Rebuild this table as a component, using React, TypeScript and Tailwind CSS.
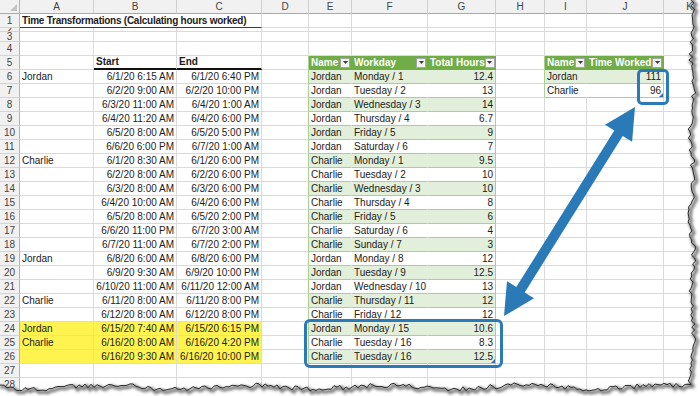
import React from 'react';

const GRID_R = 'border-r-[#dadada]';
const GRID_B = 'border-b border-b-[#dadada]';
const GREEN_R = 'border-r-[#a9d08e]';
const GREEN_B = 'border-b border-b-[#a9d08e]';
const CLEAR_R = 'border-r-transparent';
const BAND = 'bg-[#e2efda]';
const YELLOW = 'bg-[#fff44f]';

const log = [
    [6, 'Jordan', '6/1/20 6:15 AM', '6/1/20 6:40 PM', 'Jordan', 'Monday / 1', '12.4'],
    [7, '', '6/2/20 9:00 AM', '6/2/20 10:00 PM', 'Jordan', 'Tuesday / 2', '13'],
    [8, '', '6/3/20 11:00 AM', '6/4/20 1:00 AM', 'Jordan', 'Wednesday / 3', '14'],
    [9, '', '6/4/20 11:20 AM', '6/4/20 6:00 PM', 'Jordan', 'Thursday / 4', '6.7'],
    [10, '', '6/5/20 8:00 AM', '6/5/20 5:00 PM', 'Jordan', 'Friday / 5', '9'],
    [11, '', '6/6/20 6:00 PM', '6/7/20 1:00 AM', 'Jordan', 'Saturday / 6', '7'],
    [12, 'Charlie', '6/1/20 8:30 AM', '6/1/20 6:00 PM', 'Charlie', 'Monday / 1', '9.5'],
    [13, '', '6/2/20 8:00 AM', '6/2/20 6:00 PM', 'Charlie', 'Tuesday / 2', '10'],
    [14, '', '6/3/20 8:00 AM', '6/3/20 6:00 PM', 'Charlie', 'Wednesday / 3', '10'],
    [15, '', '6/4/20 10:00 AM', '6/4/20 6:00 PM', 'Charlie', 'Thursday / 4', '8'],
    [16, '', '6/5/20 8:00 AM', '6/5/20 2:00 PM', 'Charlie', 'Friday / 5', '6'],
    [17, '', '6/6/20 11:00 PM', '6/7/20 3:00 AM', 'Charlie', 'Saturday / 6', '4'],
    [18, '', '6/7/20 11:00 AM', '6/7/20 2:00 PM', 'Charlie', 'Sunday / 7', '3'],
    [19, 'Jordan', '6/8/20 6:00 AM', '6/8/20 6:00 PM', 'Jordan', 'Monday / 8', '12'],
    [20, '', '6/9/20 9:30 AM', '6/9/20 10:00 PM', 'Jordan', 'Tuesday / 9', '12.5'],
    [21, '', '6/10/20 11:00 AM', '6/11/20 12:00 AM', 'Jordan', 'Wednesday / 10', '13'],
    [22, 'Charlie', '6/11/20 8:00 AM', '6/11/20 8:00 PM', 'Charlie', 'Thursday / 11', '12'],
    [23, '', '6/12/20 8:00 AM', '6/12/20 8:00 PM', 'Charlie', 'Friday / 12', '12'],
    [24, 'Jordan', '6/15/20 7:40 AM', '6/15/20 6:15 PM', 'Jordan', 'Monday / 15', '10.6'],
    [25, 'Charlie', '6/16/20 8:00 AM', '6/16/20 4:20 PM', 'Charlie', 'Tuesday / 16', '8.3'],
    [26, '', '6/16/20 9:30 AM', '6/16/20 10:00 PM', 'Charlie', 'Tuesday / 16', '12.5'],
] as const;

const totals: Record<number, [string, string]> = {
    6: ['Jordan', '111'],
    7: ['Charlie', '96'],
};

type CellProps = {
    children?: React.ReactNode;
    r?: string;
    b?: string;
    className?: string;
    right?: boolean;
};

function Cell({children, r = GRID_R, b = GRID_B, className = '', right}: CellProps) {
    return (
        <div
            className={`flex items-center overflow-hidden whitespace-nowrap border-r ${r} ${b} ${right ? 'justify-end pr-[2px]' : 'pl-[2px]'} ${className}`}
        >
            {children}
        </div>
    );
}

function RowNum({n}: {n: number}) {
    return (
        <div className="flex items-center justify-center overflow-hidden border-r border-b border-r-[#b3b3b3] border-b-[#d4d4d4] bg-[#f1f1f1] text-[#444]">
            {n}
        </div>
    );
}

function Filter() {
    return (
        <span className="ml-auto mr-[1px] flex h-[10px] w-[10px] shrink-0 items-center justify-center border border-[#a6a6a6] bg-[#f3f3f3]">
            <svg width="5" height="3" viewBox="0 0 5 3">
                <path d="M0 0h5L2.5 3z" fill="#3c3c3c"/>
            </svg>
        </span>
    );
}

function Head({label}: {label: string}) {
    return (
        <Cell r="border-r-[#70ad47]" b="border-b border-b-[#70ad47]" className="bg-[#70ad47] font-bold text-white">
            {label}
            <Filter/>
        </Cell>
    );
}

// little resize grip in the corner of a table's last cell
function Grip() {
    return (
        <svg className="absolute right-0 bottom-0" width="4" height="4" viewBox="0 0 4 4">
            <path d="M4 0v4H0z" fill="#3a6ea5"/>
        </svg>
    );
}

function Blank({n}: {n: number}) {
    return (
        <>
            <RowNum n={n}/>
            {Array.from({length: 11}).map((_, i) => <Cell key={i}/>)}
        </>
    );
}

function TornEdge() {
    const rnd = (i: number) => {
        const s = Math.sin(i * 12.9898 + 4.1) * 43758.5453;
        return s - Math.floor(s);
    };
    const right: string[] = [];
    for (let y = -3; y <= 384; y += 3) {
        right.push(`${(692 + Math.sin(y * 0.08) * 1.6 + (rnd(y) - 0.5) * 5).toFixed(1)},${y}`);
    }
    const bottom: string[] = [];
    for (let x = 691; x >= -3; x -= 3) {
        bottom.push(`${x},${(387 + Math.sin(x * 0.045) * 1.8 + (rnd(x + 977) - 0.5) * 5).toFixed(1)}`);
    }
    const edge = 'M' + [...right, ...bottom].join(' L');
    const outside = edge + ' L-4,400 L704,400 L704,-4 Z';
    return (
        <svg className="pointer-events-none absolute inset-0" width="700" height="396" viewBox="0 0 700 396">
            <defs>
                <filter id="soft" x="-5%" y="-5%" width="110%" height="110%">
                    <feGaussianBlur stdDeviation="1.4"/>
                </filter>
            </defs>
            <path d={outside} fill="#fff"/>
            <path d={edge} fill="none" stroke="#6b6b6b" strokeWidth="3" transform="translate(2 2)" filter="url(#soft)"/>
            <path d={edge} fill="none" stroke="#2b2b2b" strokeWidth="1"/>
        </svg>
    );
}

function Arrow() {
    return (
        <svg className="pointer-events-none absolute inset-0" width="700" height="396" viewBox="0 0 700 396">
            <polygon
                fill="#2a7ab8"
                points="635,107 632.1,141.8 622.7,136 524.7,292.4 534,298.2 504,316 507,281.2 516.3,287.1 614.3,130.6 605,124.8"
            />
        </svg>
    );
}

export default function App() {
    const letters = ['A', 'B', 'C', 'D', 'E', 'F', 'G', 'H', 'I', 'J', 'K'];

    return (
        <div className="relative h-[396px] w-[700px] overflow-hidden bg-white font-['Liberation_Sans',Arial,sans-serif] text-[10px] leading-none text-[#1c1c1c]">
            <div className="grid grid-cols-[20px_74px_83px_85px_47px_43px_76px_68px_49px_42px_77px_52px] grid-rows-[14px_14px_4px_10px_14px_14px_repeat(23,14px)]">
                {/* column headers */}
                <div className="relative border-r border-b border-r-[#b3b3b3] border-b-[#a9a9a9] bg-[#f1f1f1]">
                    <svg className="absolute right-[2px] bottom-[2px]" width="7" height="7" viewBox="0 0 7 7">
                        <path d="M7 0v7H0z" fill="#c4c4c4"/>
                    </svg>
                </div>
                {letters.map(l => (
                    <div
                        key={l}
                        className="flex items-center justify-center border-r border-b border-r-[#d0d0d0] border-b-[#a9a9a9] bg-[#f1f1f1] text-[#444]"
                    >
                        {l}
                    </div>
                ))}

                {/* row 1 */}
                <RowNum n={1}/>
                <Cell b="border-b border-b-[#3d3d3d]" className="col-span-3 font-bold tracking-[-0.25px]">
                    Time Transformations (Calculating hours worked)
                </Cell>
                {Array.from({length: 8}).map((_, i) => <Cell key={i}/>)}

                <Blank n={2}/>
                <Blank n={3}/>
                <Blank n={4}/>

                {/* row 5 */}
                <RowNum n={5}/>
                <Cell/>
                <Cell b="border-b-2 border-b-[#111]" className="font-bold">Start</Cell>
                <Cell b="border-b-2 border-b-[#111]" className="font-bold">End</Cell>
                <Cell r={GREEN_R}/>
                <Head label="Name"/>
                <Head label="Workday"/>
                <Head label="Total Hours"/>
                <Cell r={GREEN_R}/>
                <Head label="Name"/>
                <Head label="Time Worked"/>
                <Cell/>

                {log.map(([n, who, start, end, name, day, hours]) => {
                    const hi = n >= 24 ? YELLOW : '';
                    const band = n % 2 === 0 ? BAND : '';
                    const total = totals[n];
                    const last = n === 26;
                    return (
                        <React.Fragment key={n}>
                            <RowNum n={n}/>
                            <Cell className={hi}>{who}</Cell>
                            <Cell right className={hi}>{start}</Cell>
                            <Cell right className={hi}>{end}</Cell>
                            <Cell r={GREEN_R}/>
                            <Cell r={CLEAR_R} b={GREEN_B} className={band}>{name}</Cell>
                            <Cell r={CLEAR_R} b={GREEN_B} className={band}>{day}</Cell>
                            <Cell r={GREEN_R} b={GREEN_B} right className={`relative ${band}`}>
                                {hours}
                                {last && <Grip/>}
                            </Cell>
                            {total ? (
                                <>
                                    <Cell r={GREEN_R}/>
                                    <Cell r={CLEAR_R} b={GREEN_B} className={band}>{total[0]}</Cell>
                                    <Cell r={GREEN_R} b={GREEN_B} right className={`relative ${band}`}>
                                        {total[1]}
                                        {n === 7 && <Grip/>}
                                    </Cell>
                                </>
                            ) : (
                                <>
                                    <Cell/>
                                    <Cell/>
                                    <Cell/>
                                </>
                            )}
                            <Cell/>
                        </React.Fragment>
                    );
                })}

                <Blank n={27}/>
                <Blank n={28}/>
            </div>

            {/* callouts */}
            <div className="absolute left-[637px] top-[69px] h-[36px] w-[32px] rounded-[5px] border-[3px] border-[#2a7ab8]"/>
            <div className="absolute left-[304px] top-[319px] h-[49px] w-[199px] rounded-[6px] border-[3px] border-[#2a7ab8]"/>
            <Arrow/>
            <TornEdge/>
        </div>
    );
}
